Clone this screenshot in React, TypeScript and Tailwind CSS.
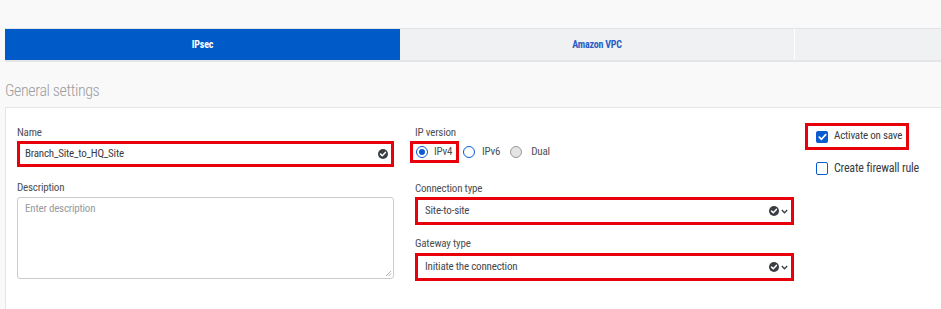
import React from "react";

const font = { fontFamily: "Roboto, 'Liberation Sans', sans-serif" };

function CheckBadge() {
  return (
    <svg width="10" height="10" viewBox="0 0 10 10" className="shrink-0">
      <circle cx="5" cy="5" r="5" fill="#3a3d42" />
      <path d="M2.6 5.1 L4.3 6.8 L7.4 3.4" fill="none" stroke="#fff" strokeWidth="1.5" strokeLinecap="round" strokeLinejoin="round" />
    </svg>
  );
}

function Chevron() {
  return (
    <svg width="7" height="5" viewBox="0 0 7 5" className="shrink-0">
      <path d="M0.8 1 L3.5 3.8 L6.2 1" fill="none" stroke="#3a3d42" strokeWidth="1.3" />
    </svg>
  );
}

function Radio({ checked, disabled }: { checked?: boolean; disabled?: boolean }) {
  if (disabled) {
    return <span className="w-[12px] h-[12px] rounded-full border border-[#9a9a9a] bg-[#e4e4e4] shrink-0" />;
  }
  return (
    <span className="w-[12px] h-[12px] rounded-full border-[1.5px] border-[#0b5bd0] bg-white flex items-center justify-center shrink-0">
      {checked && <span className="w-[6px] h-[6px] rounded-full bg-[#0b5bd0]" />}
    </span>
  );
}

function Select({ value }: { value: string }) {
  return (
    <div className="h-[28px] border-[3px] border-[#e8000b] bg-white flex items-center pl-[7px] pr-[3px] text-[11px] text-[#45484d]">
      <span className="flex-1">{value}</span>
      <CheckBadge />
      <span className="ml-[2px]">
        <Chevron />
      </span>
    </div>
  );
}

export default function App() {
  return (
    <div className="w-[941px] h-[309px] bg-[#f9f9f9] overflow-hidden pt-[28px] font-stretch-condensed tracking-[-0.2px]" style={font}>
      {/* tabs */}
      <div className="ml-[5px] h-[34px] flex border-t border-[#e2e3e5] border-b-2 border-b-[#e4e5e7] bg-[#f0f1f3]">
        <div className="w-[395px] bg-[#005bc9] flex items-center justify-center text-white text-[10px] font-bold">IPsec</div>
        <div className="w-[395px] flex items-center justify-center text-[#2a5ec6] text-[10px] font-bold border-r border-white">
          Amazon VPC
        </div>
        <div className="flex-1" />
      </div>

      {/* heading */}
      <div className="h-[45px] pl-[5px] pt-[12px] flex items-center text-[16px] text-[#9b9c9e] font-light tracking-[-0.4px]">
        General settings
      </div>

      {/* panel */}
      <div className="ml-[5px] h-[220px] bg-white border-t border-l border-[#e6e6e6] pl-[11px] flex">
        {/* col 1 */}
        <div className="w-[377px] pt-[18px]">
          <div className="h-[14px] leading-[14px] text-[11px] text-[#4d4f53]">Name</div>
          <div className="mt-[1px] h-[26px] border-[3px] border-[#e8000b] bg-white flex items-center pl-[5px] pr-[3px] text-[11px] text-[#3a3d42]">
            <span className="flex-1">Branch_Site_to_HQ_Site</span>
            <CheckBadge />
          </div>
          <div className="mt-[14px] h-[14px] leading-[14px] text-[11px] text-[#4d4f53]">Description</div>
          <div className="mt-[2px] h-[82px] border border-[#c8cbcf] rounded-[3px] bg-white relative pl-[7px] pt-[3px] text-[11px] text-[#9a9a9a]">
            Enter description
            <svg width="7" height="7" viewBox="0 0 7 7" className="absolute right-[1px] bottom-[1px]">
              <path d="M6 1 L1 6 M6 3.5 L3.5 6" stroke="#999" strokeWidth="0.8" />
            </svg>
          </div>
        </div>

        {/* col 2 */}
        <div className="w-[379px] ml-[21px] pt-[18px]">
          <div className="h-[14px] leading-[14px] text-[11px] text-[#4d4f53]">IP version</div>
          <div className="mt-[1px] h-[22px] flex items-center text-[11px] text-[#4d4f53]">
            <div className="h-[22px] w-[49px] -ml-[5px] border-[3px] border-[#e8000b] flex items-center pl-[3px] gap-[6px]">
              <Radio checked />
              <span>IPv4</span>
            </div>
            <div className="ml-[4px] flex items-center gap-[7px]">
              <Radio />
              <span>IPv6</span>
            </div>
            <div className="ml-[10px] flex items-center gap-[9px]">
              <Radio disabled />
              <span>Dual</span>
            </div>
          </div>
          <div className="mt-[19px] h-[14px] leading-[14px] text-[11px] text-[#4d4f53]">Connection type</div>
          <div className="mt-[1px]">
            <Select value="Site-to-site" />
          </div>
          <div className="mt-[12px] h-[14px] leading-[14px] text-[11px] text-[#4d4f53]">Gateway type</div>
          <div className="mt-[2px]">
            <Select value="Initiate the connection" />
          </div>
        </div>

        {/* col 3 */}
        <div className="ml-[11px] pt-[15px] text-[11px] text-[#3a3d42]">
          <div className="w-[104px] h-[27px] border-[3px] border-[#e8000b] flex items-center pl-[8px] gap-[6px] whitespace-nowrap">
            <span className="w-[12px] h-[12px] rounded-[2px] bg-[#0b5bd0] flex items-center justify-center shrink-0">
              <svg width="9" height="8" viewBox="0 0 9 8">
                <path d="M1.3 4.2 L3.5 6.3 L7.7 1.6" fill="none" stroke="#fff" strokeWidth="1.7" strokeLinecap="round" strokeLinejoin="round" />
              </svg>
            </span>
            <span>Activate on save</span>
          </div>
          <div className="mt-[9px] flex items-center pl-[11px] gap-[6px] whitespace-nowrap text-[12px]">
            <span className="w-[12px] h-[13px] rounded-[2px] border-[1.5px] border-[#0b5bd0] bg-white shrink-0" />
            <span>Create firewall rule</span>
          </div>
        </div>
      </div>
    </div>
  );
}
